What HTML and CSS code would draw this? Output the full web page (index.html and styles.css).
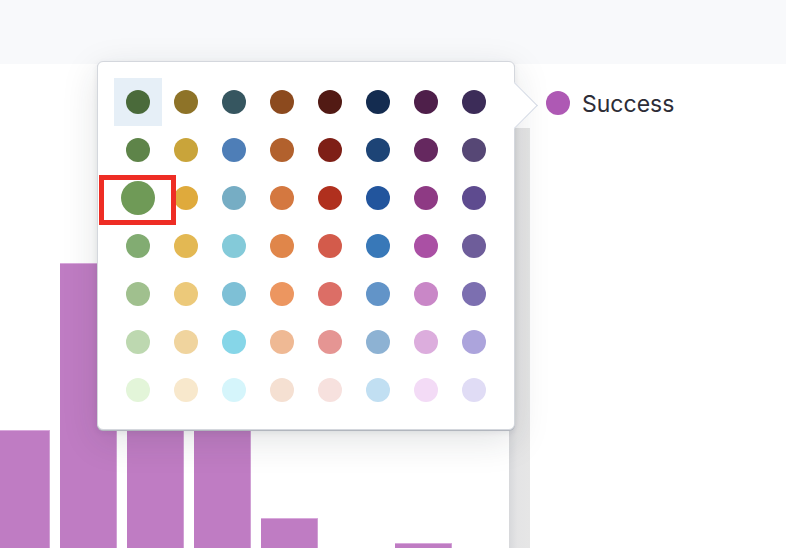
FILE: index.html
```html
<!DOCTYPE html>
<html>
<head>
<meta charset="utf-8">
<link rel="stylesheet" href="styles.css">
</head>
<body>
<div class="band"></div>
<div class="main">
  <div class="chart">
    <div class="bar" style="height:118px"></div>
    <div class="bar" style="height:285px"></div>
    <div class="bar" style="height:250px"></div>
    <div class="bar" style="height:220px"></div>
    <div class="bar" style="height:30px"></div>
    <div class="bar bar-empty" style="height:0"></div>
    <div class="bar" style="height:5px"></div>
  </div>
  <div class="strip"></div>
  <div class="legend">
    <span class="legend-dot"></span>
    <span class="legend-label">Success</span>
  </div>
</div>

<div class="popover">
  <div class="arrow"></div>
  <div class="grid">
    <div class="cell selected"><span class="dot" style="background:#4a6a3a"></span></div>
    <div class="cell"><span class="dot" style="background:#8e7328"></span></div>
    <div class="cell"><span class="dot" style="background:#365660"></span></div>
    <div class="cell"><span class="dot" style="background:#8c4a1e"></span></div>
    <div class="cell"><span class="dot" style="background:#521a14"></span></div>
    <div class="cell"><span class="dot" style="background:#142c50"></span></div>
    <div class="cell"><span class="dot" style="background:#4e1f4a"></span></div>
    <div class="cell"><span class="dot" style="background:#3c2c58"></span></div>

    <div class="cell"><span class="dot" style="background:#5e8449"></span></div>
    <div class="cell"><span class="dot" style="background:#c9a43a"></span></div>
    <div class="cell"><span class="dot" style="background:#4e7eb7"></span></div>
    <div class="cell"><span class="dot" style="background:#b2612d"></span></div>
    <div class="cell"><span class="dot" style="background:#7e1f16"></span></div>
    <div class="cell"><span class="dot" style="background:#1d4476"></span></div>
    <div class="cell"><span class="dot" style="background:#65285f"></span></div>
    <div class="cell"><span class="dot" style="background:#564775"></span></div>

    <div class="cell"><span class="dot dot-big" style="background:#6f9a57"></span></div>
    <div class="cell"><span class="dot" style="background:#dfaa3c"></span></div>
    <div class="cell"><span class="dot" style="background:#76adc4"></span></div>
    <div class="cell"><span class="dot" style="background:#d47840"></span></div>
    <div class="cell"><span class="dot" style="background:#b0301e"></span></div>
    <div class="cell"><span class="dot" style="background:#22559d"></span></div>
    <div class="cell"><span class="dot" style="background:#8e3a84"></span></div>
    <div class="cell"><span class="dot" style="background:#5e4b8f"></span></div>

    <div class="cell"><span class="dot" style="background:#82ac72"></span></div>
    <div class="cell"><span class="dot" style="background:#e3b853"></span></div>
    <div class="cell"><span class="dot" style="background:#84cad9"></span></div>
    <div class="cell"><span class="dot" style="background:#e0864a"></span></div>
    <div class="cell"><span class="dot" style="background:#d35b4b"></span></div>
    <div class="cell"><span class="dot" style="background:#3878b8"></span></div>
    <div class="cell"><span class="dot" style="background:#aa50a4"></span></div>
    <div class="cell"><span class="dot" style="background:#6e5d9a"></span></div>

    <div class="cell"><span class="dot" style="background:#a0c08e"></span></div>
    <div class="cell"><span class="dot" style="background:#ecc97a"></span></div>
    <div class="cell"><span class="dot" style="background:#7ec0d6"></span></div>
    <div class="cell"><span class="dot" style="background:#ec9660"></span></div>
    <div class="cell"><span class="dot" style="background:#dc6e66"></span></div>
    <div class="cell"><span class="dot" style="background:#6294c8"></span></div>
    <div class="cell"><span class="dot" style="background:#c987c7"></span></div>
    <div class="cell"><span class="dot" style="background:#7c6fb0"></span></div>

    <div class="cell"><span class="dot" style="background:#bdd8b0"></span></div>
    <div class="cell"><span class="dot" style="background:#f0d49e"></span></div>
    <div class="cell"><span class="dot" style="background:#86d6e8"></span></div>
    <div class="cell"><span class="dot" style="background:#efb994"></span></div>
    <div class="cell"><span class="dot" style="background:#e59593"></span></div>
    <div class="cell"><span class="dot" style="background:#8db2d3"></span></div>
    <div class="cell"><span class="dot" style="background:#dcaddd"></span></div>
    <div class="cell"><span class="dot" style="background:#aca4dc"></span></div>

    <div class="cell"><span class="dot" style="background:#e3f5d9"></span></div>
    <div class="cell"><span class="dot" style="background:#f8e8cc"></span></div>
    <div class="cell"><span class="dot" style="background:#d5f5fb"></span></div>
    <div class="cell"><span class="dot" style="background:#f5e0d2"></span></div>
    <div class="cell"><span class="dot" style="background:#f7e1de"></span></div>
    <div class="cell"><span class="dot" style="background:#c1dff2"></span></div>
    <div class="cell"><span class="dot" style="background:#f3dbf6"></span></div>
    <div class="cell"><span class="dot" style="background:#e0dcf5"></span></div>
  </div>
  <div class="highlight-box"></div>
</div>
</body>
</html>
```

FILE: styles.css
```css
html, body {
  margin: 0;
  padding: 0;
  width: 786px;
  height: 548px;
  overflow: hidden;
  background: #ffffff;
  font-family: Inter, "Liberation Sans", sans-serif;
}

.band {
  height: 64px;
  background: #f8f9fb;
}

.main {
  display: flex;
  height: 484px;
}

.chart {
  width: 516px;
  margin-left: -7px;
  display: flex;
  align-items: flex-end;
  gap: 10px;
}

.bar {
  width: 57px;
  flex: none;
  background: #bf7cc3;
  box-shadow: inset 0 1px 0 #d9a9dc, inset -1px 0 0 #d0a0d4;
}

.bar-empty {
  box-shadow: none;
}

.strip {
  width: 21px;
  margin-top: 64px;
  background: linear-gradient(to right, #d7d8db, #e4e4e5 40%, #e6e6e6);
}

.legend {
  display: flex;
  align-items: center;
  gap: 12px;
  padding-left: 16px;
  padding-top: 27px;
  height: 24px;
}

.legend-dot {
  width: 24px;
  height: 24px;
  border-radius: 50%;
  background: #ae59b4;
  flex: none;
}

.legend-label {
  font-size: 23px;
  color: #2d2d37;
  line-height: 24px;
  position: relative;
  top: 1px;
}

.popover {
  position: absolute;
  left: 97px;
  top: 61px;
  width: 416px;
  height: 367px;
  padding: 0;
  background: #ffffff;
  border: 1px solid #d4d7dd;
  border-radius: 6px;
  box-shadow: 0 1px 0 #b2b6be, 0 10px 36px rgba(30, 35, 50, 0.13), 0 2px 6px rgba(30, 35, 50, 0.08);
}

.arrow {
  position: absolute;
  right: -17px;
  top: 27px;
  width: 32px;
  height: 32px;
  background: #ffffff;
  border-top: 1px solid #d3d9e4;
  border-right: 1px solid #d3d9e4;
  transform: rotate(45deg);
}

.grid {
  position: relative;
  display: grid;
  grid-template-columns: repeat(8, 48px);
  grid-auto-rows: 48px;
  padding: 16px;
}

.cell {
  display: flex;
  align-items: center;
  justify-content: center;
}

.cell.selected {
  background: #e6eff7;
}

.dot {
  width: 24px;
  height: 24px;
  border-radius: 50%;
  display: block;
}

.dot-big {
  width: 34px;
  height: 34px;
}

.highlight-box {
  position: absolute;
  left: 1px;
  top: 113px;
  width: 67px;
  height: 40px;
  border: 5px solid #ee2d24;
}
```
